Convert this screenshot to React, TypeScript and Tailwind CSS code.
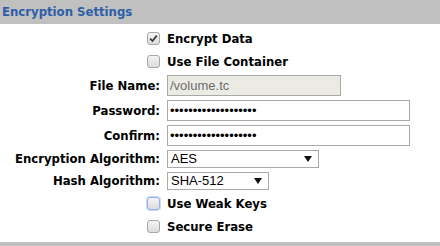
const labelFont = { fontFamily: '"DejaVu Sans Condensed", Tahoma, "DejaVu Sans", sans-serif' };

const Box = ({ checked = false, focus = false }: { checked?: boolean; focus?: boolean }) => (
  <span
    className={`flex h-[13px] w-[13px] items-center justify-center rounded-[3px] border bg-gradient-to-b from-[#f4f4f4] to-[#dcdcdc] ${
      focus ? 'border-[#8fb0ea] shadow-[0_0_0_1px_#c9d9f7]' : 'border-[#a6a6a6]'
    }`}
  >
    {checked && (
      <svg width="9" height="9" viewBox="0 0 9 9">
        <path d="M1.2 4.6 L3.5 7 L7.8 1.6" fill="none" stroke="#3a3a3a" strokeWidth="1.8" />
      </svg>
    )}
  </span>
);

const CheckRow = ({ label, checked, focus, h }: { label: string; checked?: boolean; focus?: boolean; h: string }) => (
  <>
    <div className={`flex items-center justify-end ${h}`}>
      <Box checked={checked} focus={focus} />
    </div>
    <div className={`flex items-center whitespace-nowrap text-[13px] font-bold text-black ${h}`} style={labelFont}>
      {label}
    </div>
  </>
);

const Label = ({ text, h }: { text: string; h: string }) => (
  <div
    className={`flex items-center justify-end whitespace-nowrap text-[13px] font-bold text-black ${h}`}
    style={labelFont}
  >
    {text}
  </div>
);

const Select = ({ value, w }: { value: string; w: string }) => (
  <div
    className={`flex h-[18px] items-center justify-between border border-[#a9a9a9] bg-white pl-[3px] pr-[6px] text-[13px] text-black ${w}`}
    style={{ fontFamily: '"Liberation Sans", Arial, sans-serif' }}
  >
    <span>{value}</span>
    <svg width="8" height="6" viewBox="0 0 8 6">
      <path d="M0 0 H8 L4 6 Z" fill="#111" />
    </svg>
  </div>
);

const inputCls = 'h-[21px] border border-[#a9a9a9] px-[2px] text-[13px] outline-none';
const inputFont = { fontFamily: '"Liberation Sans", Arial, sans-serif' };

export default function App() {
  return (
    <div className="h-[246px] w-[440px] overflow-hidden bg-white">
      <div className="flex h-[24px] items-center bg-[#c0c0c0] pl-[2px]">
        <h1 className="text-[13px] font-bold text-[#2d5ea8]" style={labelFont}>
          Encryption Settings
        </h1>
      </div>
      <div className="grid grid-cols-[160px_1fr] gap-x-[7px] pt-[3px] pb-[4px]">
        <CheckRow label="Encrypt Data" checked h="h-[23px]" />
        <CheckRow label="Use File Container" h="h-[23px]" />
        <Label text="File Name:" h="h-[25px]" />
        <div className="flex h-[25px] items-center">
          <input
            className={`${inputCls} w-[174px] bg-[#ebebe4] text-[#6d6d6d]`}
            style={inputFont}
            value="/volume.tc"
            disabled
            readOnly
          />
        </div>
        <Label text="Password:" h="h-[25px]" />
        <div className="flex h-[25px] items-center">
          <input
            type="password"
            className={`${inputCls} w-[243px] bg-white text-black`}
            style={inputFont}
            value="xxxxxxxxxxxxxxxxxxx"
            readOnly
          />
        </div>
        <Label text="Confirm:" h="h-[25px]" />
        <div className="flex h-[25px] items-center">
          <input
            type="password"
            className={`${inputCls} w-[243px] bg-white text-black`}
            style={inputFont}
            value="xxxxxxxxxxxxxxxxxxx"
            readOnly
          />
        </div>
        <Label text="Encryption Algorithm:" h="h-[22px]" />
        <div className="flex h-[22px] items-center">
          <Select value="AES" w="w-[152px]" />
        </div>
        <Label text="Hash Algorithm:" h="h-[22px]" />
        <div className="flex h-[22px] items-center">
          <Select value="SHA-512" w="w-[102px]" />
        </div>
        <CheckRow label="Use Weak Keys" focus h="h-[23px]" />
        <CheckRow label="Secure Erase" h="h-[23px]" />
      </div>
      <div className="h-[6px] bg-[#c0c0c0]" />
    </div>
  );
}
